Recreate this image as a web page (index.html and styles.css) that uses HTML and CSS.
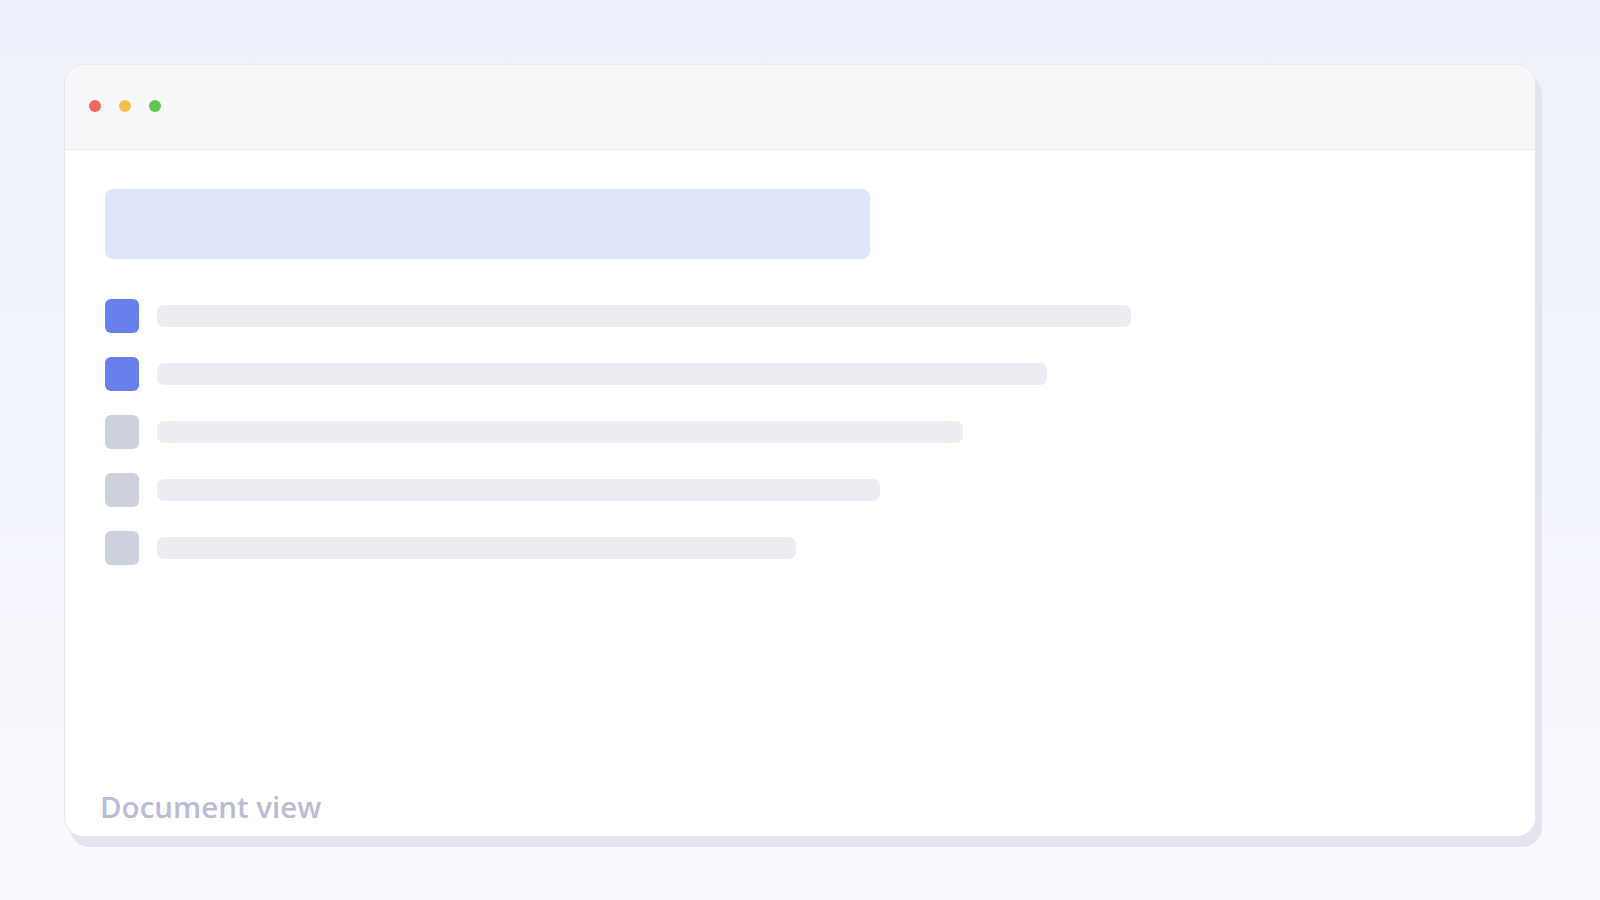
FILE: index.html
```html
<!DOCTYPE html>
<html lang="en">
  <head>
    <meta charset="UTF-8" />
    <meta name="viewport" content="width=device-width, initial-scale=1.0" />
    <title>Document view</title>
    <link rel="stylesheet" href="styles.css">
  </head>
  <body>
    <div class="window">
      <div class="titlebar">
        <span class="dot red"></span>
        <span class="dot yellow"></span>
        <span class="dot green"></span>
      </div>

      <div class="doc">
        <div class="heading-block"></div>

        <ul class="task-list">
          <li><span class="check done"></span><span class="line w70"></span></li>
          <li><span class="check done"></span><span class="line w64"></span></li>
          <li><span class="check"></span><span class="line w58"></span></li>
          <li><span class="check"></span><span class="line w52"></span></li>
          <li><span class="check"></span><span class="line w46"></span></li>
        </ul>

        <div class="label">Document view</div>
      </div>
    </div>
  </body>
</html>
```

FILE: styles.css
```css
html, body {
  height: 100%;
}
body {
  margin: 0;
  padding: 64px;
  box-sizing: border-box;
  font-family: "Open Sans", "Noto Sans", sans-serif;
  background: linear-gradient(180deg, #eef0fb 0%, #f9fafe 100%);
}
.window {
  height: 771px;
  display: flex;
  flex-direction: column;
  background: #fff;
  border: 1px solid #e7e8f0;
  border-radius: 20px;
  box-shadow: 6px 10px 0 #e3e4ee;
  overflow: hidden;
}
.titlebar {
  height: 85px;
  box-sizing: border-box;
  padding: 0 0 2px 24px;
  flex-shrink: 0;
  display: flex;
  align-items: center;
  gap: 18px;
  background: #f6f7f9;
  border-bottom: 1px solid #e8e9ef;
}
.dot {
  width: 12px;
  height: 12px;
  border-radius: 50%;
}
.red {
  background: #ee6a5f;
}
.yellow {
  background: #f5be4f;
}
.green {
  background: #61c554;
}
.doc {
  flex: 1;
  display: flex;
  flex-direction: column;
  padding: 39px 40px 9px;
}
.heading-block {
  width: 55%;
  height: 70px;
  background: #e0e4f8;
  border-radius: 8px;
}
.task-list {
  list-style: none;
  margin: 40px 0 0;
  padding: 0;
  display: flex;
  flex-direction: column;
  gap: 24px;
}
.task-list li {
  display: flex;
  align-items: center;
}
.check {
  width: 34px;
  height: 34px;
  flex-shrink: 0;
  margin-right: 18px;
  border-radius: 6px;
  background: #cdd1de;
}
.check.done {
  background: #6880ec;
}
.line {
  height: 22px;
  border-radius: 7px;
  background: #ecedf2;
}
.w70 { width: 974px; }
.w64 { width: 890px; }
.w58 { width: 806px; }
.w52 { width: 723px; }
.w46 { width: 639px; }
.label {
  margin-top: auto;
  padding-left: 35px;
  margin-left: -40px;
  font-size: 29.5px;
  font-weight: 600;
  line-height: 40px;
  color: #b9bcd3;
}
```
